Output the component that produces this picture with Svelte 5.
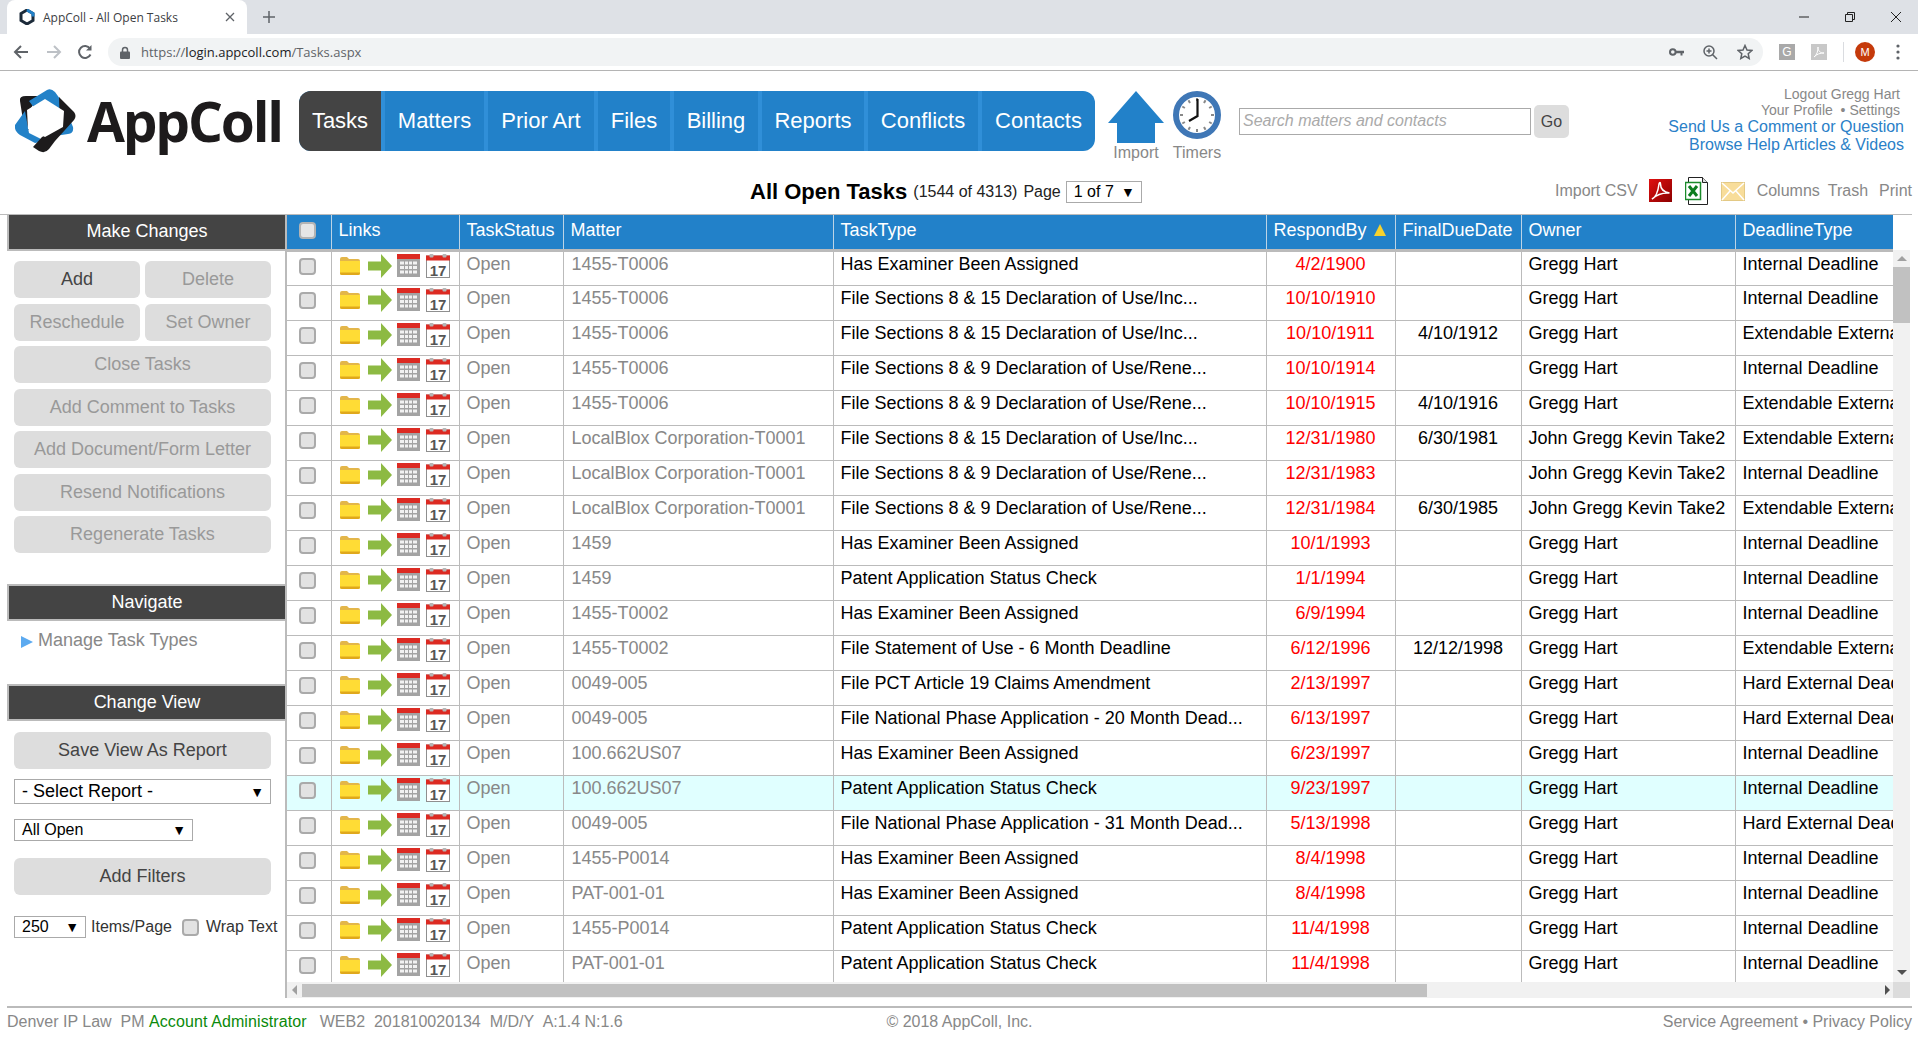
<script>
  const nav = [
    { label: 'Tasks', w: 82, on: true },
    { label: 'Matters', w: 99 },
    { label: 'Prior Art', w: 106 },
    { label: 'Files', w: 72 },
    { label: 'Billing', w: 84 },
    { label: 'Reports', w: 102 },
    { label: 'Conflicts', w: 110 },
    { label: 'Contacts', w: 113 }
  ];
  const cols = [
    { w: 44 },
    { label: 'Links', w: 128 },
    { label: 'TaskStatus', w: 104 },
    { label: 'Matter', w: 270 },
    { label: 'TaskType', w: 433 },
    { label: 'RespondBy', w: 129, sort: true },
    { label: 'FinalDueDate', w: 126 },
    { label: 'Owner', w: 214 },
    { label: 'DeadlineType', w: 158 }
  ];
  const HE = 'Has Examiner Been Assigned';
  const F15 = 'File Sections 8 & 15 Declaration of Use/Inc...';
  const F9 = 'File Sections 8 & 9 Declaration of Use/Rene...';
  const PS = 'Patent Application Status Check';
  const GH = 'Gregg Hart';
  const JG = 'John Gregg Kevin Take2';
  const ID = 'Internal Deadline';
  const EE = 'Extendable External Deadline';
  const HD = 'Hard External Deadline';
  const LB = 'LocalBlox Corporation-T0001';
  const rows = [
    ['1455-T0006', HE, '4/2/1900', '', GH, ID],
    ['1455-T0006', F15, '10/10/1910', '', GH, ID],
    ['1455-T0006', F15, '10/10/1911', '4/10/1912', GH, EE],
    ['1455-T0006', F9, '10/10/1914', '', GH, ID],
    ['1455-T0006', F9, '10/10/1915', '4/10/1916', GH, EE],
    [LB, F15, '12/31/1980', '6/30/1981', JG, EE],
    [LB, F9, '12/31/1983', '', JG, ID],
    [LB, F9, '12/31/1984', '6/30/1985', JG, EE],
    ['1459', HE, '10/1/1993', '', GH, ID],
    ['1459', PS, '1/1/1994', '', GH, ID],
    ['1455-T0002', HE, '6/9/1994', '', GH, ID],
    ['1455-T0002', 'File Statement of Use - 6 Month Deadline', '6/12/1996', '12/12/1998', GH, EE],
    ['0049-005', 'File PCT Article 19 Claims Amendment', '2/13/1997', '', GH, HD],
    ['0049-005', 'File National Phase Application - 20 Month Dead...', '6/13/1997', '', GH, HD],
    ['100.662US07', HE, '6/23/1997', '', GH, ID],
    ['100.662US07', PS, '9/23/1997', '', GH, ID],
    ['0049-005', 'File National Phase Application - 31 Month Dead...', '5/13/1998', '', GH, HD],
    ['1455-P0014', HE, '8/4/1998', '', GH, ID],
    ['PAT-001-01', HE, '8/4/1998', '', GH, ID],
    ['1455-P0014', PS, '11/4/1998', '', GH, ID],
    ['PAT-001-01', PS, '11/4/1998', '', GH, ID]
  ];
  const ticks = [30, 60, 90, 120, 150, 180, 210, 240, 270, 300, 330, 360];
</script>

{#snippet folder()}
  <svg class="i-folder" width="22" height="20" viewBox="0 0 22 20">
    <path d="M1 3q0-2 2-2h5l2 2h9q2 0 2 2v12q0 2-2 2H3q-2 0-2-2z" fill="#e3b64a" />
    <path d="M1 5h20v12q0 2-2 2H3q-2 0-2-2z" fill="#ffdc35" />
    <path d="M1 16.500h20v.5q0 2-2 2H3q-2 0-2-2z" fill="#e0a81c" />
  </svg>
{/snippet}
{#snippet arrow()}
  <svg class="i-arrow" width="24" height="24" viewBox="0 0 24 24">
    <path d="M0 7.500h13V0l11 12-11 12v-7.500H0z" fill="#8dba43" />
  </svg>
{/snippet}
{#snippet grid()}
  <svg class="i-grid" width="23" height="23" viewBox="0 0 23 23">
    <rect width="23" height="23" fill="#a3a3a3" />
    <rect width="23" height="5" fill="#dc2a22" />
    <g fill="#f2f2f2">
      <rect x="3" y="7.500" width="4" height="3" /><rect x="8" y="7.500" width="3" height="3" /><rect x="12" y="7.500" width="3" height="3" /><rect x="16" y="7.500" width="4" height="3" />
      <rect x="3" y="12" width="4" height="3" /><rect x="8" y="12" width="3" height="3" /><rect x="12" y="12" width="3" height="3" /><rect x="16" y="12" width="4" height="3" />
      <rect x="3" y="16.500" width="4" height="3" /><rect x="8" y="16.500" width="3" height="3" /><rect x="12" y="16.500" width="3" height="3" /><rect x="16" y="16.500" width="4" height="3" />
    </g>
  </svg>
{/snippet}
{#snippet cal()}
  <svg class="i-cal" width="24" height="24" viewBox="0 0 24 24">
    <rect x="0.500" y="2" width="23" height="21.500" fill="#fff" stroke="#8f8f8f" />
    <rect y="1.500" width="24" height="5" fill="#dc2a22" />
    <rect x="3.500" y="0" width="4" height="3.500" rx="1" fill="#b5b5b5" />
    <rect x="16.500" y="0" width="4" height="3.500" rx="1" fill="#b5b5b5" />
    <text x="12" y="21.500" text-anchor="middle" class="cal-num">17</text>
  </svg>
{/snippet}
{#snippet check()}
  <span class="check"></span>
{/snippet}

<div class="page">
  <div class="tabbar">
    <div class="tab">
      <svg width="16" height="16" viewBox="0 0 16 16" class="favicon">
        <path d="M8 1l6 3.500v7L8 15l-6-3.500v-7z" fill="none" stroke="#1c2b3a" stroke-width="3" />
        <path d="M8 1l6 3.500v3" fill="none" stroke="#2281c9" stroke-width="3" />
      </svg>
      <span class="tab-title">AppColl - All Open Tasks</span>
      <svg width="10" height="10" viewBox="0 0 10 10" class="tab-x"><path d="M1 1l8 8M9 1l-8 8" stroke="#5f6368" stroke-width="1.300" /></svg>
    </div>
    <svg width="12" height="12" viewBox="0 0 12 12" class="plus"><path d="M6 0v12M0 6h12" stroke="#5f6368" stroke-width="1.500" /></svg>
    <div class="win">
      <svg width="12" height="12" viewBox="0 0 12 12"><path d="M1 6h10" stroke="#222" /></svg>
      <svg width="12" height="12" viewBox="0 0 12 12"><path d="M1.500 3.500h7v7h-7zM3.500 3.500v-2h7v7h-2" fill="none" stroke="#222" /></svg>
      <svg width="12" height="12" viewBox="0 0 12 12"><path d="M1 1l10 10M11 1L1 11" stroke="#222" /></svg>
    </div>
  </div>
  <div class="toolbar">
    <svg width="16" height="16" viewBox="0 0 16 16" class="tb-back"><path d="M15 8H2M8 2L2 8l6 6" fill="none" stroke="#5f6368" stroke-width="2" /></svg>
    <svg width="16" height="16" viewBox="0 0 16 16" class="tb-fwd"><path d="M1 8h13M8 2l6 6-6 6" fill="none" stroke="#bdc1c6" stroke-width="2" /></svg>
    <svg width="16" height="16" viewBox="0 0 16 16" class="tb-reload"><path d="M13.500 10.500A6 6 0 1 1 13 4.500" fill="none" stroke="#5f6368" stroke-width="2" /><path d="M14.500 1v5.500H9z" fill="#5f6368" /></svg>
    <div class="omni">
      <svg width="10" height="13" viewBox="0 0 10 13" class="lock"><path d="M2.500 6V4a2.500 2.500 0 0 1 5 0v2" fill="none" stroke="#5f6368" stroke-width="1.500" /><rect y="5.500" width="10" height="7.500" rx="1" fill="#5f6368" /></svg>
      <span class="url"><span class="url-dim">https://</span>login.appcoll.com<span class="url-dim">/Tasks.aspx</span></span>
      <div class="omni-icons">
        <svg width="15" height="10" viewBox="0 0 15 10"><circle cx="3.800" cy="5" r="2.800" fill="none" stroke="#5f6368" stroke-width="2" /><path d="M6.500 3.800H15v2.400h-1.500V8.500H11.500V6.200H6.500z" fill="#5f6368" /></svg>
        <svg width="15" height="15" viewBox="0 0 15 15"><circle cx="6" cy="6" r="5" fill="none" stroke="#5f6368" stroke-width="1.500" /><path d="M9.500 9.500L14 14M6 3.500v5M3.500 6h5" stroke="#5f6368" stroke-width="1.500" /></svg>
        <svg width="16" height="16" viewBox="0 0 16 16"><path d="M8 1.500l2 4.500 4.800.5-3.600 3.200 1 4.800L8 12.100l-4.200 2.400 1-4.800L1.200 6.500 6 6z" fill="none" stroke="#5f6368" stroke-width="1.500" /></svg>
      </div>
    </div>
    <div class="ext-icons">
      <span class="ext ext-g">G</span>
      <span class="ext"><svg width="12" height="12" viewBox="0 0 12 12"><path d="M1 11c3-2 4-6 4-10 0 4 2 6 6 6-4 0-7 1-10 4z" fill="none" stroke="#fff" /></svg></span>
      <span class="ext-sep"></span>
      <span class="avatar">M</span>
      <svg width="4" height="16" viewBox="0 0 4 16" class="dots"><circle cx="2" cy="2" r="1.600" fill="#5f6368" /><circle cx="2" cy="8" r="1.600" fill="#5f6368" /><circle cx="2" cy="14" r="1.600" fill="#5f6368" /></svg>
    </div>
  </div>

  <header class="head">
    <div class="logo">
      <svg width="62" height="64" viewBox="0 0 62 64">
        <path d="M5 12Q4 7 11 7L24 7L14 22L14 40L10 44Z" fill="#1d1b1c" />
        <path d="M14 12L32 1Q36-1 40 3L48 14L58 38Q59 45 53 45L40 47Z" fill="#2382c8" />
        <path d="M0 36L10 22L14 44L30 52L20 54L5 46Q-1 42 0 36Z" fill="#2382c8" />
        <path d="M44 8L59 23Q62 27 59 31L40 52L34 60Q30 65 24 62L18 58L27 48L45 38Z" fill="#1d1b1c" />
        <path d="M30 10L49 22L48 38L30 48L13 40L12 21Z" fill="#fff" />
      </svg>
      <span class="logo-text">AppColl</span>
    </div>
    <nav class="nav">
      {#each nav as n}
        <span class="nav-item" class:on={n.on} style:width="{n.w}px">{n.label}</span>
      {/each}
    </nav>
    <div class="quick quick-import">
      <svg width="56" height="52" viewBox="0 0 56 52"><path d="M28 0l28 32H47v20H9V32H0z" fill="#2281c9" /></svg>
      <span>Import</span>
    </div>
    <div class="quick quick-timers">
      <svg width="48" height="48" viewBox="0 0 48 48">
        <circle cx="24" cy="24" r="21" fill="#fff" stroke="#3f77b6" stroke-width="6" />
        {#each ticks as t}
          <rect x="23" y="7" width="2" height="3" fill="#888" transform="rotate({t} 24 24)" />
        {/each}
        <path d="M24.500 8v17L16 30" fill="none" stroke="#111" stroke-width="2.200" />
      </svg>
      <span>Timers</span>
    </div>
    <div class="search">Search matters and contacts</div>
    <button class="go">Go</button>
    <div class="userlinks">
      <div class="ul-a">Logout Gregg Hart</div>
      <div class="ul-a">Your Profile &nbsp;• Settings</div>
      <div class="ul-b">Send Us a Comment or Question</div>
      <div class="ul-b">Browse Help Articles &amp; Videos</div>
    </div>
  </header>

  <div class="titlebar">
    <span class="title">All Open Tasks</span>
    <span class="count">(1544 of 4313)</span>
    <span class="page-lbl">Page</span>
    <span class="sel sel-page">1 of 7<i>▼</i></span>
    <div class="tools">
      <span class="tool-import">Import CSV</span>
      <svg class="t-pdf" width="23" height="24" viewBox="0 0 23 24">
        <defs><linearGradient id="pdfg" x1="0" y1="0" x2="1" y2="1"><stop offset="0" stop-color="#e01010" /><stop offset="1" stop-color="#8c0000" /></linearGradient></defs>
        <rect y="0" width="23" height="23" fill="url(#pdfg)" />
        <path d="M3 20c4-2 6-7 7-15 .5-2 1.500-2 1.500 0 0 5 3 8 9 9-6-.5-12 1-17.500 6z" fill="none" stroke="#fff" stroke-width="1.500" />
      </svg>
      <svg class="t-xls" width="24" height="30" viewBox="0 0 24 30">
        <path d="M3.500 1.500h14l5 5v22h-19z" fill="#fff" stroke="#222" />
        <path d="M17.500 1.500v5h5" fill="#ddd" stroke="#222" />
        <rect x="0.500" y="6.500" width="15" height="17" fill="#fff" stroke="#1a8a2a" stroke-width="1.500" />
        <path d="M4 10l8 10M12 10l-8 10" stroke="#0d7d1f" stroke-width="3" />
      </svg>
      <svg class="t-mail" width="24" height="22" viewBox="0 0 24 22">
        <rect x="0.500" y="2.500" width="23" height="18" fill="#f8dd9a" stroke="#e3c985" />
        <path d="M1 3l11 10L23 3M1 20l8-9M23 20l-8-9" fill="none" stroke="#fff" stroke-width="1.500" />
      </svg>
      <span class="tool-col">Columns</span>
      <span class="tool-trash">Trash</span>
      <span class="tool-print">Print</span>
    </div>
  </div>

  <main class="main">
    <aside class="side">
      <h2 class="side-h">Make Changes</h2>
      <div class="btns">
        <div class="btn-row">
          <button class="btn on">Add</button>
          <button class="btn">Delete</button>
        </div>
        <div class="btn-row">
          <button class="btn">Reschedule</button>
          <button class="btn">Set Owner</button>
        </div>
        <button class="btn">Close Tasks</button>
        <button class="btn">Add Comment to Tasks</button>
        <button class="btn">Add Document/Form Letter</button>
        <button class="btn">Resend Notifications</button>
        <button class="btn">Regenerate Tasks</button>
      </div>
      <h2 class="side-h h-nav">Navigate</h2>
      <div class="manage"><i class="tri"></i>Manage Task Types</div>
      <h2 class="side-h h-view">Change View</h2>
      <div class="view">
        <button class="btn on">Save View As Report</button>
        <span class="sel sel-report">- Select Report -<i>▼</i></span>
        <span class="sel sel-open">All Open<i>▼</i></span>
        <button class="btn on btn-filter">Add Filters</button>
        <div class="items">
          <span class="sel sel-250">250<i>▼</i></span>
          <span class="items-lbl">Items/Page</span>
          <span class="check check-wrap"></span>
          <span class="wrap-lbl">Wrap Text</span>
        </div>
      </div>
    </aside>

    <div class="grid-wrap">
      <div class="grid-view">
        <table>
          <colgroup>
            {#each cols as c}<col style:width="{c.w}px" />{/each}
          </colgroup>
          <thead>
            <tr>
              {#each cols as c, i}
                <th>
                  {#if i === 0}<span class="check check-h"></span>{:else}{c.label}{/if}
                  {#if c.sort}<i class="sort"></i>{/if}
                </th>
              {/each}
            </tr>
          </thead>
          <tbody>
            {#each rows as r, i}
              <tr class:hl={i === 15}>
                <td class="c-check">{@render check()}</td>
                <td class="c-links"><div class="links">{@render folder()}{@render arrow()}{@render grid()}{@render cal()}</div></td>
                <td class="gray">Open</td>
                <td class="gray c-matter">{r[0]}</td>
                <td>{r[1]}</td>
                <td class="date red">{r[2]}</td>
                <td class="date">{r[3]}</td>
                <td>{r[4]}</td>
                <td class="dl">{r[5]}</td>
              </tr>
            {/each}
          </tbody>
        </table>
        <div class="vbar">
          <i class="ar-up"></i>
          <span class="vthumb"></span>
          <i class="ar-down"></i>
        </div>
      </div>
      <div class="hbar">
        <i class="ar-left"></i>
        <span class="hthumb"></span>
        <i class="ar-right"></i>
        <span class="corner"></span>
      </div>
    </div>
  </main>

  <footer class="foot">
    <div class="foot-l">Denver IP Law &nbsp;PM <span class="green">Account Administrator</span><span class="foot-meta">WEB2 &nbsp;201810020134 &nbsp;M/D/Y &nbsp;A:1.4 N:1.6</span></div>
    <div class="foot-c">© 2018 AppColl, Inc.</div>
    <div class="foot-r">Service Agreement • Privacy Policy</div>
  </footer>
</div>

<style>
  :global(body) { margin: 0; overflow: hidden; background: #fff; }
  .page { width: 1918px; height: 1040px; display: flex; flex-direction: column; font-family: "Liberation Sans", Arial, sans-serif; font-size: 18px; color: #000; overflow: hidden; }
  button { font-family: inherit; border: 0; padding: 0; margin: 0; }

  .tabbar { height: 34px; background: #dee1e6; display: flex; align-items: center; flex: none; }
  .tab { margin-left: 7px; width: 240px; height: 34px; background: #fff; border-radius: 8px 8px 0 0; display: flex; align-items: center; }
  .favicon { margin-left: 12px; flex: none; }
  .tab-title { margin-left: 8px; font: 12px "Open Sans", sans-serif; color: #3c4043; width: 148px; white-space: nowrap; }
  .tab-x { margin-left: 34px; }
  .plus { margin-left: 16px; }
  .win { margin-left: auto; display: flex; gap: 34px; padding-right: 16px; }
  .toolbar { height: 36px; border-bottom: 1px solid #b4b4b4; background: #fff; display: flex; align-items: center; flex: none; }
  .tb-back { margin-left: 13px; }
  .tb-fwd { margin-left: 17px; }
  .tb-reload { margin-left: 15px; }
  .omni { margin-left: 15px; width: 1655px; height: 28px; background: #f1f3f4; border-radius: 14px; display: flex; align-items: center; }
  .lock { margin-left: 12px; }
  .url { margin-left: 11px; font: 13px "Open Sans", sans-serif; color: #202124; }
  .url-dim { color: #5f6368; }
  .omni-icons { margin-left: auto; display: flex; align-items: center; gap: 19px; padding-right: 10px; }
  .ext-icons { display: flex; align-items: center; margin-left: 16px; }
  .ext { width: 16px; height: 16px; background: #c8c8c8; color: #fff; display: flex; align-items: center; justify-content: center; font: 12px "Liberation Sans", sans-serif; margin-right: 16px; }
  .ext-g { background: #a9a9a9; }
  .ext-sep { width: 1px; height: 20px; background: #dadce0; margin-right: 11px; }
  .avatar { width: 20px; height: 20px; border-radius: 50%; background: #c53a0b; color: #fff; font: 11px "Liberation Sans", sans-serif; display: flex; align-items: center; justify-content: center; }
  .dots { margin-left: 21px; }

  .head { height: 104px; display: flex; align-items: flex-start; flex: none; }
  .logo { margin: 18px 0 0 15px; width: 284px; display: flex; align-items: center; flex: none; }
  .logo-text { margin-left: 10px; font: 700 55px/64px "Open Sans", sans-serif; color: #1d1b1c; letter-spacing: -2.200px; white-space: nowrap; }
  .nav { margin-top: 20px; height: 60px; display: flex; background: #2281c9; border-radius: 12px; overflow: hidden; flex: none; }
  .nav-item { height: 60px; line-height: 60px; font-size: 22px; color: #fff; text-align: center; box-sizing: content-box; flex: none; }
  .nav-item + .nav-item { border-left: 4px solid #308fd8; }
  .nav-item.on { background: #444; }
  .quick { display: flex; flex-direction: column; align-items: center; flex: none; color: #888; font-size: 16px; line-height: 18px; margin-top: 20px; }
  .quick-import { width: 56px; margin-left: 13px; }
  .quick-import span { margin-top: 1px; }
  .quick-timers { width: 48px; margin-left: 9px; }
  .quick-timers span { margin-top: 5px; }
  .search { margin: 37px 0 0 18px; width: 292px; height: 27px; border: 1px solid #aaa; box-sizing: border-box; padding-left: 3px; font-style: italic; font-size: 16px; line-height: 24px; color: #aaa; flex: none; }
  .go { margin: 34px 0 0 3px; width: 35px; height: 33px; border-radius: 5px; background: #ddd; font-size: 16px; color: #444; flex: none; }
  .userlinks { margin: 15px 0 0 auto; padding-right: 14px; text-align: right; }
  .ul-a { font-size: 14px; line-height: 16px; color: #888; padding-right: 4px; }
  .ul-b { font-size: 16px; line-height: 18px; color: #2a80c8; }

  .titlebar { height: 39px; display: flex; align-items: center; flex: none; padding-left: 750px; box-sizing: border-box; padding-right: 6px; padding-bottom: 6px; }
  .title { font-size: 22px; font-weight: bold; }
  .count { font-size: 16px; margin-left: 6px; color: #222; }
  .page-lbl { font-size: 16px; margin-left: 6px; color: #222; }
  .sel { display: inline-flex; align-items: center; justify-content: space-between; border: 1px solid #aaa; box-sizing: border-box; background: #fff; padding: 0 6px 0 7px; font-size: 16px; color: #000; }
  .sel i { font-style: normal; font-size: 14px; }
  .sel-page { margin-left: 5px; width: 76px; height: 22px; }
  .tools { margin: 0 0 2px auto; display: flex; align-items: center; color: #888; font-size: 16px; }
  .t-pdf { margin-left: 11px; }
  .t-xls { margin-left: 13px; }
  .t-mail { margin-left: 12px; }
  .tool-col { margin-left: 12px; }
  .tool-trash { margin-left: 8px; }
  .tool-print { margin-left: 11px; }

  .main { height: 784px; display: flex; flex: none; }
  .side { width: 287px; box-sizing: border-box; border-right: 2px solid #bbb; border-top: 1px solid #bbb; flex: none; padding-left: 7px; display: flex; flex-direction: column; }
  .side-h { margin: 0; height: 37px; box-sizing: border-box; border: 2px solid #bbb; border-right: 0; background: #444; color: #fff; font-size: 18px; font-weight: normal; line-height: 32px; text-align: center; flex: none; }
  .side > .side-h:first-child { border-top: 0; height: 36px; }
  .btns { padding: 10px 0 0 7px; width: 257px; display: flex; flex-direction: column; gap: 5.500px; }
  .btn-row { display: flex; gap: 5px; }
  .btn-row .btn { width: 126px; }
  .btn { height: 37px; border-radius: 6px; background: #ddd; color: #999; font-size: 18px; text-align: center; width: 257px; flex: none; }
  .btn.on { color: #444; }
  .h-nav { margin-top: 31px; }
  .manage { margin-top: 7px; height: 24px; line-height: 24px; color: #888; display: flex; align-items: center; padding-left: 14px; }
  .tri { width: 0; height: 0; border-left: 12px solid #5caaf0; border-top: 6.500px solid transparent; border-bottom: 6.500px solid transparent; margin-right: 5px; margin-top: 3px; }
  .h-view { margin-top: 32px; }
  .view { padding: 11px 0 0 7px; display: flex; flex-direction: column; align-items: flex-start; }
  .sel-report { margin-top: 10px; width: 257px; height: 25px; font-size: 18px; }
  .sel-open { margin-top: 15px; width: 179px; height: 22px; }
  .btn-filter { margin-top: 17px; }
  .items { margin-top: 21px; display: flex; align-items: center; font-size: 16px; color: #333; height: 22px; white-space: nowrap; }
  .sel-250 { width: 72px; height: 22px; }
  .items-lbl { margin-left: 5px; }
  .wrap-lbl { margin-left: 7px; }

  .check { display: block; width: 17px; height: 17px; box-sizing: border-box; border: 2px solid #aaa; border-radius: 4px; background: #e2e2e2; }
  .check-wrap { margin-left: 10px; }
  .check-h { margin: 0 auto; border-color: #b4b4b4; background: #e6e6e6; }

  .grid-wrap { flex: 1; min-width: 0; display: flex; flex-direction: column; border-top: 1px solid #bbb; margin-right: 6px; }
  .grid-view { height: 767px; display: flex; overflow: hidden; flex: none; }
  table { width: 1606px; table-layout: fixed; border-collapse: collapse; flex: none; align-self: flex-start; }
  th { height: 35px; box-sizing: border-box; background: #2281c9; color: #fff; font-size: 18px; font-weight: normal; text-align: left; padding: 0 7px 3px; border-right: 1px solid #bcd4e6; border-bottom: 3px solid #bbb; white-space: nowrap; }
  th:first-child { padding: 0 3px 3px 0; }
  th:last-child { border-right: 0; }
  .sort { display: inline-block; width: 0; height: 0; border-left: 6.500px solid transparent; border-right: 6.500px solid transparent; border-bottom: 12px solid #f6d22e; margin-left: 2px; }
  td { height: 35px; box-sizing: border-box; padding: 2px 7px 0; line-height: 21px; vertical-align: top; border-right: 1px solid #bbb; border-bottom: 1px solid #bbb; white-space: nowrap; overflow: hidden; color: #000; }
  td:last-child { border-right: 0; }
  .hl td { background: #e0ffff; }
  .gray { color: #888; }
  td.c-matter { padding-left: 8px; }
  .date { text-align: center; }
  .red { color: #f00; }
  td.c-check { padding: 6px 3px 0 0; }
  .c-check .check { margin: 0 auto; }
  td.c-links { padding: 2px 0 0 7px; }
  .links { display: flex; align-items: center; }
  .i-arrow { margin-left: 7px; }
  .i-grid { margin-left: 5px; }
  .i-cal { margin-left: 6px; }
  .cal-num { font: bold 15px "Liberation Sans", sans-serif; fill: #555; }

  .vbar { width: 17px; height: 732px; margin-top: 35px; background: #f1f1f1; flex: none; display: flex; flex-direction: column; align-items: center; }
  .ar-up { margin-top: 6px; width: 0; height: 0; border: 5px solid transparent; border-top: 0; border-bottom: 5px solid #a0a0a0; }
  .vthumb { margin-top: 6px; width: 17px; height: 56px; background: #c1c1c1; }
  .ar-down { margin-top: auto; margin-bottom: 7px; width: 0; height: 0; border: 5px solid transparent; border-bottom: 0; border-top: 5px solid #505050; }
  .hbar { height: 16px; width: 1623px; background: #f1f1f1; display: flex; align-items: center; flex: none; }
  .ar-left { margin-left: 5px; width: 0; height: 0; border: 5px solid transparent; border-left: 0; border-right: 5px solid #a0a0a0; }
  .hthumb { margin-left: 5px; width: 1125px; height: 13px; background: #c1c1c1; }
  .ar-right { margin-left: auto; margin-right: 3px; width: 0; height: 0; border: 5px solid transparent; border-right: 0; border-left: 5px solid #505050; order: 3; }
  .corner { width: 17px; height: 16px; background: #dcdcdc; order: 4; }

  .foot { margin: 8px 6px 0 7px; border-top: 2px solid #bbb; display: grid; grid-template-columns: 1fr auto 1fr; font-size: 16px; line-height: 18px; padding-top: 5px; color: #888; white-space: nowrap; }
  .foot-c { grid-column: 2; }
  .foot-r { text-align: right; }
  .foot-meta { margin-left: 13px; }
  .green { color: #0a8a0a; letter-spacing: 0.100px; }
</style>
